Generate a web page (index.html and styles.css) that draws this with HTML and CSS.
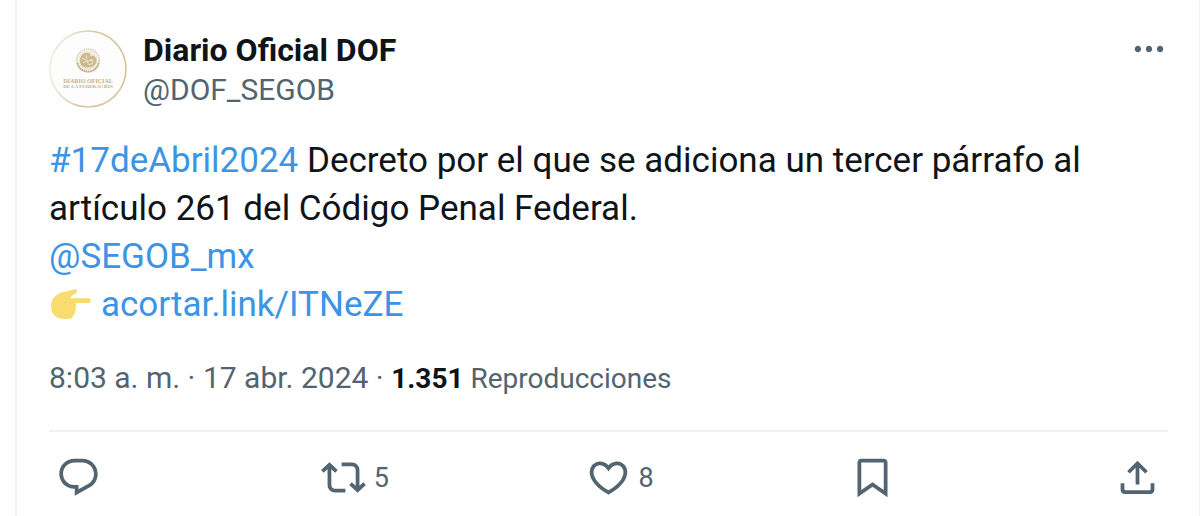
FILE: index.html
```html
<!DOCTYPE html>
<html lang="es">
<head>
    <meta charset="UTF-8">
    <meta name="viewport" content="width=device-width, initial-scale=1.0">
    <title>Diario Oficial DOF</title>
    <link rel="stylesheet" href="styles.css">
</head>
<body>
    <article class="tweet">
        <header class="tweet-header">
            <svg class="avatar" viewBox="0 0 78 78" aria-hidden="true">
                <defs>
                    <linearGradient id="ring" x1="0" y1="0.4" x2="1" y2="0.6">
                        <stop offset="0" stop-color="#f1ede2"/>
                        <stop offset="0.5" stop-color="#d8c9a5"/>
                        <stop offset="1" stop-color="#d3c4a0"/>
                    </linearGradient>
                </defs>
                <circle cx="39" cy="39" r="38" fill="#fdfdfd" stroke="url(#ring)" stroke-width="1.6"/>
                <!-- seal -->
                <circle cx="39" cy="30.5" r="11.3" fill="none" stroke="#dccfb3" stroke-width="1.8" stroke-dasharray="1.6 0.7"/>
                <circle cx="39" cy="30.5" r="9.8" fill="#f0e9da"/>
                <path d="M31 31c0-6 4-9 8-8 2 .5 3 2 2.500 3.500 2-2 6 0 6 4 0 4-4 7-8 7-5 .5-8.500-2-8.500-6.500z" fill="#cdb98f"/>
                <path d="M33 28l6 3 5-1M34 33l4-2 2 4M37 25l1 4M42 29l2 4-4 2" fill="none" stroke="#f4eee2" stroke-width=".8"/>
                <path d="M28.500 33c1.500 6 6 8.500 10.500 8.500s9-2.500 10.500-8.500" fill="none" stroke="#c3ae81" stroke-width="1.800" stroke-dasharray="1.500 .5"/>
                <text class="seal-title" x="39" y="53" text-anchor="middle">DIARIO OFICIAL</text>
                <text class="seal-subtitle" x="39" y="58" text-anchor="middle">DE LA FEDERACIÓN</text>
            </svg>
            <div class="author">
                <a href="#" class="name">Diario Oficial DOF</a>
                <a href="#" class="handle">@DOF_SEGOB</a>
            </div>
            <button type="button" class="more" aria-label="Más opciones">
                <svg viewBox="0 0 24 24"><path d="M3 12c0-1.100.9-2 2-2s2 .9 2 2-.9 2-2 2-2-.9-2-2zm9 2c1.100 0 2-.9 2-2s-.9-2-2-2-2 .9-2 2 .9 2 2 2zm7 0c1.100 0 2-.9 2-2s-.9-2-2-2-2 .9-2 2 .9 2 2 2z"/></svg>
            </button>
        </header>

        <p class="tweet-text">
            <a href="#">#17deAbril2024</a> Decreto por el que se adiciona un tercer párrafo al artículo 261 del Código Penal Federal.<br>
            <a href="#">@SEGOB_mx</a><br>
            <svg class="emoji" viewBox="0 0 42 34" aria-hidden="true"><path d="M22 3c2.500-1 4.500-1 5 .8.400 1.800-1 2.800-3 3.700-2 1-3 2-3.500 3.700h18.300c2.900 0 2.900 4.800 0 4.800H25c1.500 1.200 1.600 3 .3 4.200 1.200 1.300 1 3.200-.5 4.200.8 1.600 0 3.400-1.800 3.900 0 2.600-1.500 3.700-4.500 3.700h-4.500C6 32 1 26.500 1 19.500 1 13 4.500 8.500 10 6c4-1.800 8-1.500 12-3z"/></svg><a href="#">acortar.link/ITNeZE</a>
        </p>

        <div class="meta">
            <a href="#">8:03 a. m. · 17 abr. 2024</a> · <span class="views"><strong>1.351</strong> Reproducciones</span>
        </div>

        <div class="actions">
            <button type="button" aria-label="Responder">
                <svg viewBox="0 0 24 24"><path d="M1.751 10c0-4.420 3.584-8 8.005-8h4.366c4.490 0 8.129 3.640 8.129 8.130 0 2.960-1.607 5.680-4.196 7.110l-8.054 4.460v-3.690h-.067c-4.490.1-8.183-3.510-8.183-8.010zm8.005-6c-3.317 0-6.005 2.690-6.005 6 0 3.370 2.770 6.080 6.138 6.010l.351-.01h1.761v2.300l5.087-2.810c1.951-1.080 3.163-3.130 3.163-5.360 0-3.390-2.744-6.130-6.129-6.130H9.756z"/></svg>
            </button>
            <button type="button" aria-label="Repostear">
                <svg viewBox="0 0 24 24"><path d="M4.500 3.880l4.432 4.140-1.364 1.460L5.500 7.550V16c0 1.100.896 2 2 2H13v2H7.500c-2.209 0-4-1.790-4-4V7.550L1.432 9.480.068 8.020 4.500 3.880zM16.500 6H11V4h5.500c2.209 0 4 1.790 4 4v8.450l2.068-1.930 1.364 1.460-4.432 4.140-4.432-4.140 1.364-1.460 2.068 1.930V8c0-1.100-.896-2-2-2z"/></svg>
                <span>5</span>
            </button>
            <button type="button" aria-label="Me gusta">
                <svg viewBox="0 0 24 24"><path d="M16.697 5.500c-1.222-.06-2.679.51-3.890 2.160l-.805 1.090-.806-1.090C9.984 6.010 8.526 5.440 7.304 5.500c-1.243.07-2.349.78-2.910 1.910-.552 1.120-.633 2.780.479 4.820 1.074 1.970 3.257 4.270 7.129 6.610 3.870-2.340 6.052-4.640 7.126-6.610 1.111-2.040 1.030-3.700.477-4.820-.561-1.130-1.666-1.840-2.908-1.910zm4.187 7.690c-1.351 2.480-4.001 5.120-8.379 7.670l-.503.3-.504-.3c-4.379-2.550-7.029-5.190-8.382-7.670-1.360-2.500-1.410-4.860-.514-6.670.887-1.790 2.647-2.910 4.601-3.010 1.651-.09 3.368.56 4.798 2.010 1.429-1.450 3.146-2.100 4.796-2.010 1.954.1 3.714 1.220 4.601 3.010.896 1.810.846 4.170-.514 6.670z"/></svg>
                <span>8</span>
            </button>
            <button type="button" aria-label="Guardar">
                <svg viewBox="0 0 24 24"><path d="M4 4c0-1.100.9-2 2-2h12c1.100 0 2 .9 2 2v18.500l-8-5.600-8 5.600V4zm2 0v14.700l6-4.200 6 4.200V4H6z"/></svg>
            </button>
            <button type="button" aria-label="Compartir">
                <svg viewBox="0 0 24 24"><path d="M12 3l5.500 5.500-1.410 1.420L13 6.820V15.700h-2V6.820l-3.090 3.100L6.500 8.500 12 3zM21 15v3.500c0 1.400-.9 2.300-2.300 2.300H5.300C3.900 20.800 3 19.900 3 18.500V15h2v3.300c0 .3.200.5.5.5h13c.3 0 .5-.2.5-.5V15h2z"/></svg>
            </button>
        </div>
    </article>
</body>
</html>
```
FILE: styles.css
```css
* {
    box-sizing: border-box;
}
body {
    margin: 0;
    background: #fff;
    color: #0f1419;
    font-family: Roboto, "Liberation Sans", sans-serif;
    overflow-x: hidden;
}
a {
    color: inherit;
    text-decoration: none;
}
button {
    display: flex;
    align-items: center;
    padding: 0;
    border: 0;
    background: none;
    color: #536471;
    font: inherit;
    cursor: pointer;
}
svg {
    display: block;
    flex: none;
    fill: currentColor;
}
.tweet {
    min-height: 100vh;
    margin-left: 15px;
    padding: 30px 31px 0 32px;
    border-left: 2px solid #eff1f2;
    border-right: 1px solid #eff1f2;
}
.tweet-header {
    display: flex;
    align-items: flex-start;
}
.avatar {
    width: 78px;
    height: 78px;
}
.seal-title,
.seal-subtitle {
    fill: #c3ae81;
    font-family: "Liberation Serif", serif;
    font-weight: bold;
    font-size: 6px;
}
.seal-subtitle {
    font-size: 5px;
}
.author {
    display: flex;
    flex: 1;
    flex-direction: column;
    margin-left: 16px;
    font-size: 30px;
    line-height: 40px;
}
.name {
    font-size: 32px;
    font-weight: bold;
}
.handle {
    color: #536471;
}
.more svg {
    width: 38px;
    height: 38px;
}
.tweet-text {
    margin: 27px 0 0;
    font-size: 35px;
    line-height: 48px;
}
.tweet-text a {
    color: #3d94e4;
}
.emoji {
    display: inline-block;
    width: 42px;
    height: 34px;
    margin: 0 9px 0 1px;
    vertical-align: -5px;
    fill: #f9dc71;
}
.meta {
    margin-top: 29px;
    padding-bottom: 31px;
    border-bottom: 2px solid #eff1f2;
    color: #536471;
    font-size: 30px;
    line-height: 40px;
}
.views {
    font-size: 28px;
}
.meta strong {
    color: #0f1419;
}
.actions {
    display: flex;
    padding: 23px 8px 16px 7px;
    font-size: 27px;
}
.actions button {
    flex: 1;
    gap: 8px;
}
.actions button:last-child {
    flex: none;
}
.actions svg {
    width: 45px;
    height: 45px;
}
```
